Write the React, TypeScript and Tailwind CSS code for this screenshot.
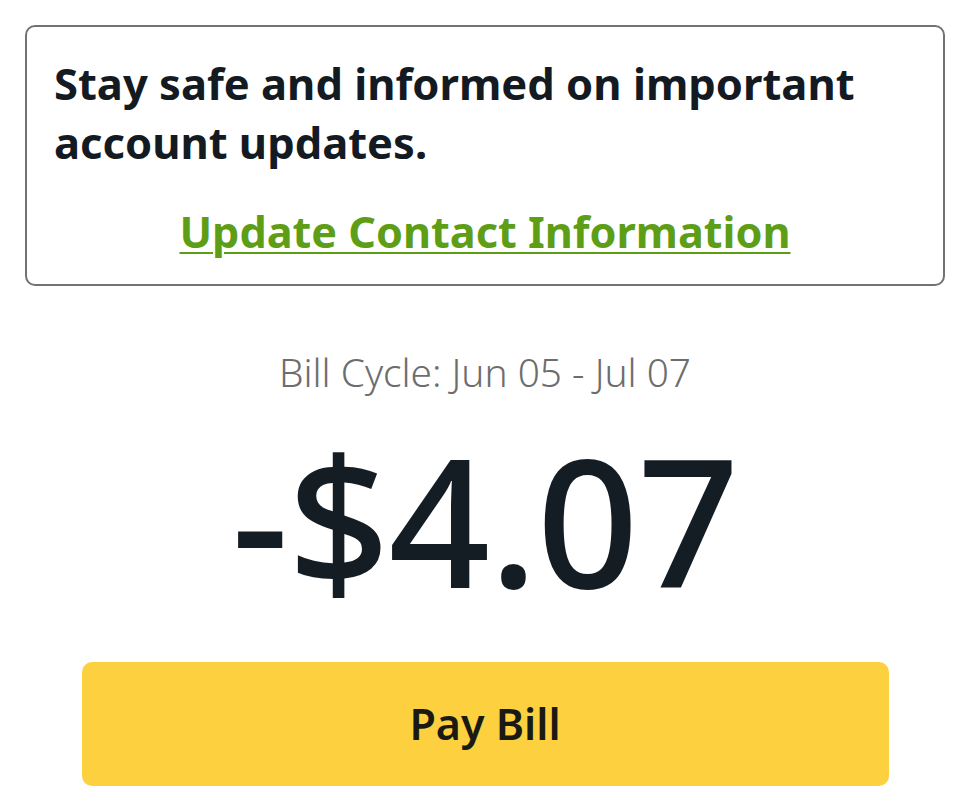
import React from "react";

const sans = "font-['Noto_Sans','Open_Sans',sans-serif]";

export default function App() {
  return (
    <div className={`w-[970px] h-[809px] bg-white overflow-hidden ${sans}`}>
      <div className="pt-[25px] px-[25px]">
        {/* alert card */}
        <div className="w-[920px] h-[261px] border-2 border-[#727272] rounded-[10px] pt-[27px] px-[27px]">
          <p className="text-[43.5px] leading-[59px] font-bold text-[#141a21]">
            Stay safe and informed on important account updates.
          </p>
          <div className="mt-[28px] text-center">
            <a
              href="#"
              className="text-[43.2px] font-bold text-[#5e9e16] underline decoration-2 underline-offset-[4px]"
            >
              Update Contact Information
            </a>
          </div>
        </div>
      </div>

      <div className="flex flex-col items-center">
        <p className="mt-[57px] text-[38.8px] font-light text-[#6d6d6d]">Bill Cycle: Jun 05 - Jul 07</p>
        <p className="mt-[29px] text-[178px] leading-none font-medium text-[#141c24] tracking-[-1px]">
          -$4.07
        </p>
        <button className="mt-[54px] w-[807px] h-[124px] rounded-[10px] bg-[#fcd03f] text-[43px] font-semibold text-[#1a1a14] font-stretch-condensed">
          Pay Bill
        </button>
      </div>
    </div>
  );
}
